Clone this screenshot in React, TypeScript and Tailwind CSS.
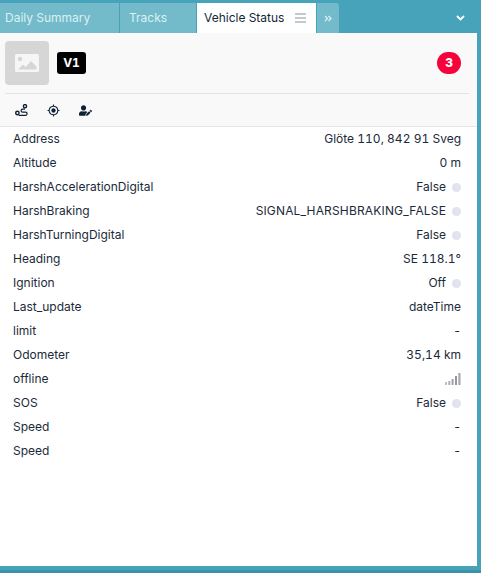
import React from "react";
import { FaUserEdit } from "react-icons/fa";
import { MdGpsFixed } from "react-icons/md";

const font = { fontFamily: "Inter, 'Noto Sans', sans-serif" };

type Row = { k: string; v?: string; dot?: boolean; signal?: boolean; wide?: boolean };
const rows: Row[] = [
  { k: "Address", v: "Glöte 110, 842 91 Sveg" },
  { k: "Altitude", v: "0 m" },
  { k: "HarshAccelerationDigital", v: "False", dot: true },
  { k: "HarshBraking", v: "SIGNAL_HARSHBRAKING_FALSE", dot: true, wide: true },
  { k: "HarshTurningDigital", v: "False", dot: true },
  { k: "Heading", v: "SE 118.1°" },
  { k: "Ignition", v: "Off", dot: true },
  { k: "Last_update", v: "dateTime" },
  { k: "limit", v: "-" },
  { k: "Odometer", v: "35,14 km" },
  { k: "offline", signal: true },
  { k: "SOS", v: "False", dot: true },
  { k: "Speed", v: "-" },
  { k: "Speed", v: "-" },
];

function Signal() {
  return (
    <svg width="16" height="14" viewBox="0 0 16 14" className="block">
      <rect x="0" y="10" width="2" height="3" fill="#bfc2c8" />
      <rect x="3.3" y="9" width="2" height="4" fill="#aeb1b7" />
      <rect x="6.6" y="7" width="2" height="6" fill="#a0a3a9" />
      <rect x="10" y="4" width="2" height="9" fill="#94979d" />
      <rect x="13.3" y="1" width="2.2" height="12" fill="#a6a9ae" />
    </svg>
  );
}

export default function App() {
  return (
    <div style={font} className="w-[481px] h-[573px] bg-[#46a3b9] flex flex-col overflow-hidden text-[12px] text-[#1b2a3a] tabular-nums">
      <div className="h-[33px] pt-[3px] flex shrink-0">
        <div className="w-[119px] mr-px bg-[#73bbca] text-[#dcf0f4] flex items-center pl-[5px]">Daily Summary</div>
        <div className="w-[76px] bg-[#73bbca] text-[#dcf0f4] flex items-center pl-[9px]">Tracks</div>
        <div className="w-[119px] ml-px bg-white text-[#14263a] flex items-center pl-[7px] gap-[11px]">
          <span>Vehicle Status</span>
          <svg width="11" height="10" viewBox="0 0 11 10" className="block">
            <path d="M0 1h11M0 5h11M0 9h11" stroke="#8a949c" strokeWidth="1.2" />
          </svg>
        </div>
        <div className="w-[22px] ml-px bg-[#73bbca] rounded-tr-[3px] flex items-center justify-center">
          <svg width="8" height="7" viewBox="0 0 8 7">
            <path d="M1 1l2.5 2.5L1 6M4.5 1L7 3.5 4.5 6" fill="none" stroke="#d9eef3" strokeWidth="1.4" />
          </svg>
        </div>
        <div className="flex-1 flex items-center justify-end pr-[16px] pb-px">
          <svg width="9" height="6" viewBox="0 0 9 6">
            <path d="M1 1l3.5 3.5L8 1" fill="none" stroke="#ffffff" strokeWidth="1.8" />
          </svg>
        </div>
      </div>
      <div className="w-[477px] h-[533px] bg-white shrink-0 flex flex-col">
        <div className="bg-[#f9f9f9] border-b border-[#e5e5ec] h-[94px] flex flex-col">
          <div className="h-[61px] ml-[5px] mr-[8px] border-b border-[#e2e2ea] flex items-start justify-between pt-[8px]">
            <div className="flex items-center gap-2">
              <div className="w-[44px] h-[44px] rounded-[4px] bg-[#d6d6d6] flex items-center justify-center">
                <svg width="24" height="18" viewBox="0 0 24 18">
                  <rect width="24" height="18" rx="1.5" fill="#f6f6f6" />
                  <circle cx="5" cy="5" r="2.2" fill="#d6d6d6" />
                  <path d="M3 15.5l5-5 2.5 2.5L16 7l5.5 5.5v3z" fill="#d6d6d6" />
                </svg>
              </div>
              <div className="w-[29px] h-[22px] rounded-[3px] bg-black text-white font-bold flex items-center justify-center">V1</div>
            </div>
            <div className="mt-[11px] mr-[8px] w-[24px] h-[22px] rounded-full bg-[#f5043c] text-white font-extrabold flex items-center justify-center">3</div>
          </div>
          <div className="flex-1 flex items-center pl-[15px] gap-[19px]">
            <svg width="13" height="13" viewBox="0 0 13 13" className="block">
              <circle cx="2.4" cy="9" r="1.7" fill="none" stroke="#0f2035" strokeWidth="1.4" />
              <circle cx="10" cy="2.2" r="1.6" fill="none" stroke="#0f2035" strokeWidth="1.4" />
              <path d="M10 5.2H7.6a1.5 1.5 0 0 0 0 3h2.9a1.6 1.6 0 0 1 0 3.2H3.6" fill="none" stroke="#0f2035" strokeWidth="1.2" />
            </svg>
            <MdGpsFixed size={13} color="#0f2035" className="block" />
            <FaUserEdit size={13} color="#0f2035" className="block" />
          </div>
        </div>
        <div className="flex flex-col">
          {rows.map((r, i) => (
            <div key={i} className="h-[24px] flex items-center justify-between pl-[13px] pr-[16px]">
              <span>{r.k}</span>
              <div className="flex items-center gap-[6px]">
                {r.v && <span className={r.wide ? "tracking-[0.16px]" : ""}>{r.v}</span>}
                {r.signal && <Signal />}
                {r.dot && <span className="w-[9px] h-[9px] rounded-full bg-[#e1e3ee]" />}
              </div>
            </div>
          ))}
        </div>
      </div>
      <div className="flex-1 flex flex-col justify-end">
        <div className="h-[3px] bg-[#3b93a6]" />
      </div>
    </div>
  );
}
